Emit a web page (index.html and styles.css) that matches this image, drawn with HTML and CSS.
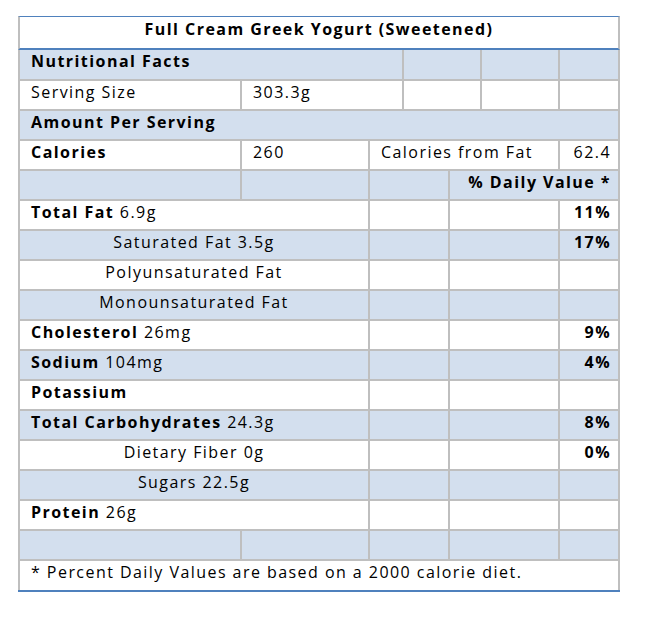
FILE: index.html
```html
<!DOCTYPE html>
<html lang="en">
<head>
<meta charset="utf-8">
<title>Full Cream Greek Yogurt (Sweetened)</title>
<link rel="stylesheet" href="styles.css">
</head>
<body>
<div class="label">
  <div class="title">Full Cream Greek Yogurt (Sweetened)</div>
  <div class="grid">
    <div class="cell blue s3 bold">Nutritional Facts</div>
    <div class="cell blue s2"></div>
    <div class="cell blue"></div>
    <div class="cell blue"></div>

    <div class="cell">Serving Size</div>
    <div class="cell s2">303.3g</div>
    <div class="cell s2"></div>
    <div class="cell"></div>
    <div class="cell"></div>

    <div class="cell blue s7 bold">Amount Per Serving</div>

    <div class="cell bold">Calories</div>
    <div class="cell">260</div>
    <div class="cell s4">Calories from Fat</div>
    <div class="cell right">62.4</div>

    <div class="cell blue"></div>
    <div class="cell blue"></div>
    <div class="cell blue s2"></div>
    <div class="cell blue s3 bold right">% Daily Value *</div>

    <div class="cell s2"><b>Total Fat</b> 6.9g</div>
    <div class="cell s2"></div>
    <div class="cell s2"></div>
    <div class="cell bold right">11%</div>

    <div class="cell blue s2 center">Saturated Fat 3.5g</div>
    <div class="cell blue s2"></div>
    <div class="cell blue s2"></div>
    <div class="cell blue bold right">17%</div>

    <div class="cell s2 center">Polyunsaturated Fat</div>
    <div class="cell s2"></div>
    <div class="cell s2"></div>
    <div class="cell"></div>

    <div class="cell blue s2 center">Monounsaturated Fat</div>
    <div class="cell blue s2"></div>
    <div class="cell blue s2"></div>
    <div class="cell blue"></div>

    <div class="cell s2"><b>Cholesterol</b> 26mg</div>
    <div class="cell s2"></div>
    <div class="cell s2"></div>
    <div class="cell bold right">9%</div>

    <div class="cell blue s2"><b>Sodium</b> 104mg</div>
    <div class="cell blue s2"></div>
    <div class="cell blue s2"></div>
    <div class="cell blue bold right">4%</div>

    <div class="cell s2 bold">Potassium</div>
    <div class="cell s2"></div>
    <div class="cell s2"></div>
    <div class="cell"></div>

    <div class="cell blue s2"><b>Total Carbohydrates</b> 24.3g</div>
    <div class="cell blue s2"></div>
    <div class="cell blue s2"></div>
    <div class="cell blue bold right">8%</div>

    <div class="cell s2 center">Dietary Fiber 0g</div>
    <div class="cell s2"></div>
    <div class="cell s2"></div>
    <div class="cell bold right">0%</div>

    <div class="cell blue s2 center">Sugars 22.5g</div>
    <div class="cell blue s2"></div>
    <div class="cell blue s2"></div>
    <div class="cell blue"></div>

    <div class="cell s2"><b>Protein</b> 26g</div>
    <div class="cell s2"></div>
    <div class="cell s2"></div>
    <div class="cell"></div>

    <div class="cell blue"></div>
    <div class="cell blue"></div>
    <div class="cell blue s2"></div>
    <div class="cell blue s2"></div>
    <div class="cell blue"></div>

    <div class="cell s7">* Percent Daily Values are based on a 2000 calorie diet.</div>
  </div>
</div>
</body>
</html>
```

FILE: styles.css
```css
html, body {
  margin: 0;
  padding: 0;
  background: #ffffff;
}

body {
  font-family: "Open Sans", "Liberation Sans", sans-serif;
  font-size: 16px;
  letter-spacing: 1.45px;
  color: #000000;
}

.label {
  width: 602px;
  margin: 16px 0 0 18px;
}

.title {
  height: 31px;
  line-height: 24px;
  border-top: 1px solid #4f81bd;
  border-bottom: 2px solid #4f81bd;
  border-left: 2px solid #bfbfbf;
  border-right: 2px solid #bfbfbf;
  text-align: center;
  font-weight: 700;
  box-sizing: content-box;
}

.grid {
  display: grid;
  grid-template-columns: 220px 126px 32px 44px 30px 76px 58px;
  grid-template-rows: 29px repeat(16, 28px) 29px;
  gap: 2px;
  padding: 0 2px;
  background: #bfbfbf;
  border-bottom: 2px solid #4f81bd;
}

.cell {
  background: #ffffff;
  line-height: 22px;
  padding: 0 7px 0 11px;
  white-space: nowrap;
  overflow: hidden;
}

.cell.blue {
  background: #d3dfee;
}

.cell b,
.bold {
  font-weight: 700;
}

.center {
  text-align: center;
  padding: 0;
}

.right {
  text-align: right;
  padding-left: 0;
}

.s2 { grid-column: span 2; }
.s3 { grid-column: span 3; }
.s4 { grid-column: span 4; }
.s7 { grid-column: span 7; }
```
